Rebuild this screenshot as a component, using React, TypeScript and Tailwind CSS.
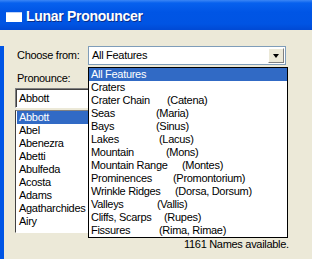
import React from "react";

const features = [
  { name: "All Features", sub: "", w: "w-auto" },
  { name: "Craters", sub: "", w: "w-auto" },
  { name: "Crater Chain", sub: "(Catena)", w: "w-[76px]" },
  { name: "Seas", sub: "(Maria)", w: "w-[65px]" },
  { name: "Bays", sub: "(Sinus)", w: "w-[65px]" },
  { name: "Lakes", sub: "(Lacus)", w: "w-[68px]" },
  { name: "Mountain", sub: "(Mons)", w: "w-[75px]" },
  { name: "Mountain Range", sub: "(Montes)", w: "w-[91px]" },
  { name: "Prominences", sub: "(Promontorium)", w: "w-[82px]" },
  { name: "Wrinkle Ridges", sub: "(Dorsa, Dorsum)", w: "w-[84px]" },
  { name: "Valleys", sub: "(Vallis)", w: "w-[66px]" },
  { name: "Cliffs, Scarps", sub: "(Rupes)", w: "w-[73px]" },
  { name: "Fissures", sub: "(Rima, Rimae)", w: "w-[68px]" },
];

const names = [
  "Abbott",
  "Abel",
  "Abenezra",
  "Abetti",
  "Abulfeda",
  "Acosta",
  "Adams",
  "Agatharchides",
  "Airy",
];

export default function App() {
  return (
    <div className="relative w-[312px] h-[259px] overflow-hidden bg-[#ECE9D8] font-['Liberation_Sans',Arial,sans-serif] text-[11px] leading-[13px] tracking-[-0.3px] text-black">
      {/* title bar */}
      <div className="h-[30px] flex items-center bg-[linear-gradient(to_bottom,#3B86F5_0px,#0761EE_3px,#0055E5_12px,#0054E3_24px,#0049D4_30px)]">
        <div className="ml-[6px] mt-[3px] w-[16px] h-[10px] bg-white border-t border-[#BFD3F7]" />
        <span className="ml-[4px] mt-[3px] text-white font-bold text-[14px] tracking-[-0.3px] [text-shadow:1px_1px_0_#0A2E8A]">
          Lunar Pronouncer
        </span>
      </div>

      {/* body */}
      <div className="h-[229px] border-l-4 border-[#0055E5] pl-[11px]">
        <div className="mt-[16px] flex items-center h-[19px]">
          <span className="pl-[2px] w-[73px]">Choose from:</span>
          <div className="w-[198px] h-[19px] bg-white border border-[#7F9DB9] flex items-center">
            <span className="pl-[3px] flex-1">All Features</span>
            <div className="w-[16px] h-[15px] mr-[1px] bg-[#ECE9D8] border border-t-white border-l-white border-r-[#808080] border-b-[#808080] flex items-center justify-center">
              <div className="w-0 h-0 border-l-[3.5px] border-r-[3.5px] border-t-[4px] border-l-transparent border-r-transparent border-t-black" />
            </div>
          </div>
        </div>

        <div className="mt-[7px] pl-[2px]">Pronounce:</div>

        <div className="mt-[3px] w-[190px] h-[20px] bg-white border border-t-[#808080] border-l-[#808080] border-b-white border-r-white shadow-[inset_1px_1px_0_#404040] flex items-center pl-[3px]">
          Abbott
        </div>

        <div className="mt-[2px] w-[190px] h-[123px] bg-white border border-t-[#808080] border-l-[#404040] border-b-white border-r-white pl-[1px]">
          {names.map((n, i) => (
            <div
              key={n}
              className={
                i === 0
                  ? "h-[13px] bg-[#316AC5] text-white pl-[2px]"
                  : "h-[13px] pl-[2px]"
              }
            >
              {n}
            </div>
          ))}
        </div>

        <div className="mt-[5px] pl-[169px] whitespace-nowrap">1161 Names available.</div>
      </div>

      {/* open dropdown */}
      <div className="absolute left-[88px] top-[67px] w-[200px] bg-white border border-black">
        {features.map((f, i) => (
          <div
            key={f.name}
            className={
              i === 0
                ? "h-[13px] flex whitespace-nowrap pl-[2px] bg-[#316AC5] text-white"
                : "h-[13px] flex whitespace-nowrap pl-[2px]"
            }
          >
            <span className={f.w + " shrink-0"}>{f.name}</span>
            {f.sub && <span>{f.sub}</span>}
          </div>
        ))}
      </div>
    </div>
  );
}
